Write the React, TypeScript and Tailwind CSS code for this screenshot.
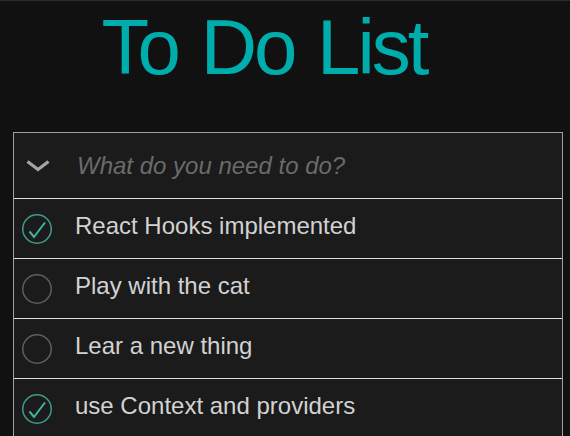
import { useState } from "react";

interface Todo {
  id: number;
  text: string;
  done: boolean;
}

const initialTodos: Todo[] = [
  { id: 1, text: "React Hooks implemented", done: true },
  { id: 2, text: "Play with the cat", done: false },
  { id: 3, text: "Lear a new thing", done: false },
  { id: 4, text: "use Context and providers", done: true },
];

function Toggle({ done }: { done: boolean }) {
  return (
    <svg width="30" height="30" viewBox="0 0 30 30" className="shrink-0">
      <circle
        cx="15"
        cy="15"
        r="14.25"
        fill="none"
        stroke={done ? "#3f9c8a" : "#5e5e5e"}
        strokeWidth="1.5"
      />
      {done && (
        <polyline
          points="7.5,17.5 12,23 23,8.5"
          fill="none"
          stroke="#3fb89d"
          strokeWidth="2"
        />
      )}
    </svg>
  );
}

export default function App() {
  const [todos, setTodos] = useState<Todo[]>(initialTodos);
  const [draft, setDraft] = useState("");

  const toggle = (id: number) =>
    setTodos((list) =>
      list.map((t) => (t.id === id ? { ...t, done: !t.done } : t))
    );

  return (
    <div className="min-h-[436px] bg-[#111111] border-t border-t-[#2a2a30] font-['Liberation_Sans',Arial,sans-serif]">
      <h1 className="pt-[6px] text-center text-[78px] leading-[80px] tracking-[-3px] [word-spacing:4px] text-[#00adad] pr-[42px]">
        To Do List
      </h1>

      {/* List */}
      <div className="mt-[45px] ml-[13px] w-[550px] border border-[#a0a0a0] bg-[#1b1b1b]">
        <div className="flex h-[65px] items-center">
          <div className="flex w-[48px] shrink-0 justify-center">
            <svg width="24" height="12" viewBox="0 0 24 12">
              <polyline
                points="1.5,1.5 12,9.5 22.5,1.5"
                fill="none"
                stroke="#a4a4a4"
                strokeWidth="3.2"
              />
            </svg>
          </div>
          <input
            value={draft}
            onChange={(e) => setDraft(e.target.value)}
            placeholder="What do you need to do?"
            className="flex-1 bg-transparent pl-[15px] text-[24px] italic text-[#d0d0d0] outline-none placeholder:text-[#6a6a6a]"
          />
        </div>

        {todos.map((todo) => (
          <div
            key={todo.id}
            className="flex h-[60px] items-center border-t border-t-[#e0e0e0] pl-[8px]"
          >
            <button onClick={() => toggle(todo.id)} className="flex">
              <Toggle done={todo.done} />
            </button>
            <span className="ml-[23px] pb-[6px] text-[24px] text-[#d2d2d2]">
              {todo.text}
            </span>
          </div>
        ))}
      </div>
    </div>
  );
}
